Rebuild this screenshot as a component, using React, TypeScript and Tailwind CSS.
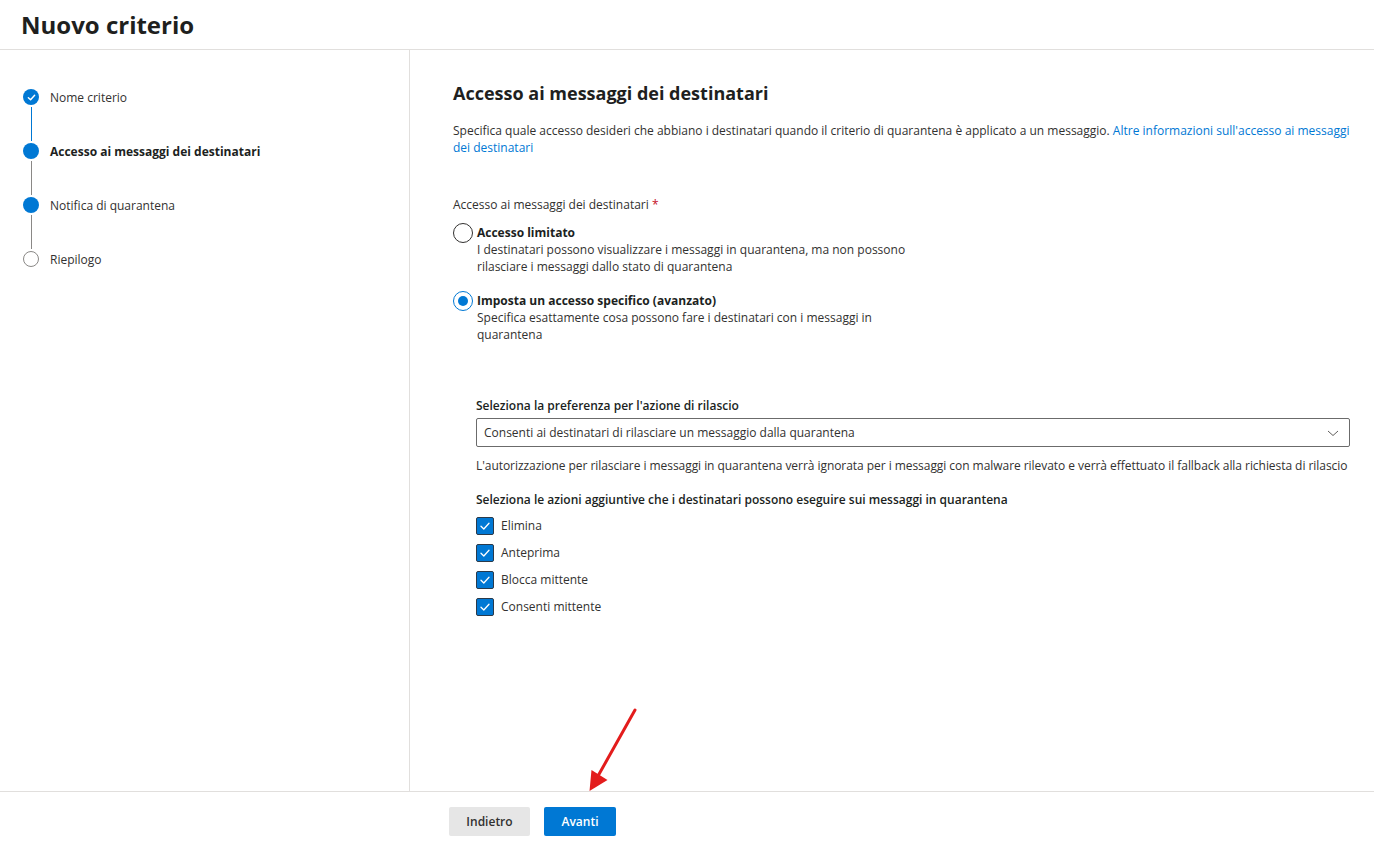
import React from 'react';

const steps = [
  { label: 'Nome criterio', state: 'done' },
  { label: 'Accesso ai messaggi dei destinatari', state: 'current' },
  { label: 'Notifica di quarantena', state: 'todo-filled' },
  { label: 'Riepilogo', state: 'todo' },
];

function StepDot({ state }: { state: string }) {
  if (state === 'done') {
    return (
      <div className="w-[16px] h-[16px] rounded-full bg-[#0078d4] flex items-center justify-center">
        <svg width="9" height="9" viewBox="0 0 10 10" fill="none">
          <path d="M1.5 5.2 L4 7.5 L8.5 2.5" stroke="white" strokeWidth="1.6" strokeLinecap="round" strokeLinejoin="round" />
        </svg>
      </div>
    );
  }
  if (state === 'todo') {
    return <div className="w-[16px] h-[16px] rounded-full border-[1.5px] border-[#8a8886] bg-white" />;
  }
  return <div className="w-[16px] h-[16px] rounded-full bg-[#0078d4]" />;
}

function Checkbox({ label }: { label: string }) {
  return (
    <div className="flex items-center h-[27px]">
      <div className="w-[18px] h-[18px] rounded-[2px] bg-[#0078d4] border border-[#2b3a4a] flex items-center justify-center">
        <svg width="12" height="12" viewBox="0 0 12 12" fill="none">
          <path d="M2 6.3 L4.8 9 L10 3.3" stroke="white" strokeWidth="1.3" strokeLinecap="round" strokeLinejoin="round" />
        </svg>
      </div>
      <span className="ml-[7px]">{label}</span>
    </div>
  );
}

export default function App() {
  return (
    <div className="relative w-full h-[843px] flex flex-col bg-white text-[#323130] font-['Open_Sans',sans-serif] text-[12px] leading-[17px] overflow-hidden">
      {/* Header */}
      <header className="h-[50px] shrink-0 border-b border-[#e1dfdd] flex items-center pl-[21px]">
        <h1 className="text-[24px] font-bold text-[#201f1e] leading-none">Nuovo criterio</h1>
      </header>

      <div className="flex flex-1 min-h-0">
        {/* Stepper */}
        <aside className="w-[410px] shrink-0 border-r border-[#e1dfdd] pl-[23px] pt-[39px]">
          {steps.map((s, i) => (
            <div key={s.label} className="flex h-[54px]">
              <div className="flex flex-col items-center w-[16px]">
                <StepDot state={s.state} />
                {i < steps.length - 1 && (
                  <div className={`w-px flex-1 mt-[2px] mb-[2px] ${i === 0 ? 'bg-[#0078d4]' : 'bg-[#8a8886]'}`} />
                )}
              </div>
              <div className={`ml-[11px] h-[16px] flex items-center ${s.state === 'current' ? 'font-bold text-[#201f1e]' : ''}`}>
                {s.label}
              </div>
            </div>
          ))}
        </aside>

        {/* Main content */}
        <main className="flex-1 min-w-0 pl-[43px] pr-[24px] pt-[31px]">
          <h2 className="text-[18px] font-bold text-[#201f1e] leading-[24px]">Accesso ai messaggi dei destinatari</h2>
          <p className="mt-[17px]">
            Specifica quale accesso desideri che abbiano i destinatari quando il criterio di quarantena è applicato a un messaggio.{' '}
            <span className="text-[#0078d4]">Altre informazioni sull'accesso ai messaggi dei destinatari</span>
          </p>

          <div className="mt-[40px]">
            Accesso ai messaggi dei destinatari <span className="text-[#c50f1f]">*</span>
          </div>

          <div className="mt-[11px] flex items-start">
            <div className="w-[20px] h-[20px] rounded-full border border-[#323130] bg-white shrink-0 -mt-[1px]" />
            <div className="ml-[4px]">
              <div className="font-bold text-[#201f1e]">Accesso limitato</div>
              <div>
                I destinatari possono visualizzare i messaggi in quarantena, ma non possono
                <br />
                rilasciare i messaggi dallo stato di quarantena
              </div>
            </div>
          </div>

          <div className="mt-[17px] flex items-start">
            <div className="w-[20px] h-[20px] rounded-full border border-[#0078d4] bg-white shrink-0 -mt-[1px] flex items-center justify-center">
              <div className="w-[10px] h-[10px] rounded-full bg-[#0078d4]" />
            </div>
            <div className="ml-[4px]">
              <div className="font-bold text-[#201f1e]">Imposta un accesso specifico (avanzato)</div>
              <div>
                Specifica esattamente cosa possono fare i destinatari con i messaggi in
                <br />
                quarantena
              </div>
            </div>
          </div>

          <div className="ml-[23px] mt-[54px]">
            <div className="font-semibold text-[#201f1e]">Seleziona la preferenza per l'azione di rilascio</div>
            <div className="mt-[4px] h-[29px] border border-[#6b6b6b] rounded-[2px] flex items-center justify-between pl-[7px] pr-[10px]">
              <span>Consenti ai destinatari di rilasciare un messaggio dalla quarantena</span>
              <svg width="12" height="12" viewBox="0 0 12 12" fill="none">
                <path d="M1 4 L6 8.5 L11 4" stroke="#605e5c" strokeWidth="1" />
              </svg>
            </div>
            <div className="mt-[10px] whitespace-nowrap tracking-[-0.05px]">
              L'autorizzazione per rilasciare i messaggi in quarantena verrà ignorata per i messaggi con malware rilevato e verrà effettuato il fallback alla richiesta di rilascio
            </div>
            <div className="mt-[17px] font-semibold text-[#201f1e]">
              Seleziona le azioni aggiuntive che i destinatari possono eseguire sui messaggi in quarantena
            </div>
            <div className="mt-[4px]">
              <Checkbox label="Elimina" />
              <Checkbox label="Anteprima" />
              <Checkbox label="Blocca mittente" />
              <Checkbox label="Consenti mittente" />
            </div>
          </div>
        </main>
      </div>

      {/* Footer */}
      <footer className="h-[52px] shrink-0 border-t border-[#e1dfdd] flex items-start pt-[15px] pl-[449px] gap-[14px]">
        <button className="h-[29px] w-[81px] rounded-[2px] bg-[#e6e6e6] font-semibold text-[#323130]">Indietro</button>
        <button className="h-[29px] w-[72px] rounded-[2px] bg-[#0078d4] font-semibold text-white">Avanti</button>
      </footer>

      {/* Red annotation arrow */}
      <svg className="absolute left-[580px] top-[700px]" width="70" height="100" viewBox="0 0 70 100" fill="none">
        <line x1="55" y1="10" x2="18" y2="76" stroke="#e31c1c" strokeWidth="3" strokeLinecap="round" />
        <polygon points="9.5,91 11.5,70 27.5,80" fill="#e31c1c" />
      </svg>
    </div>
  );
}
